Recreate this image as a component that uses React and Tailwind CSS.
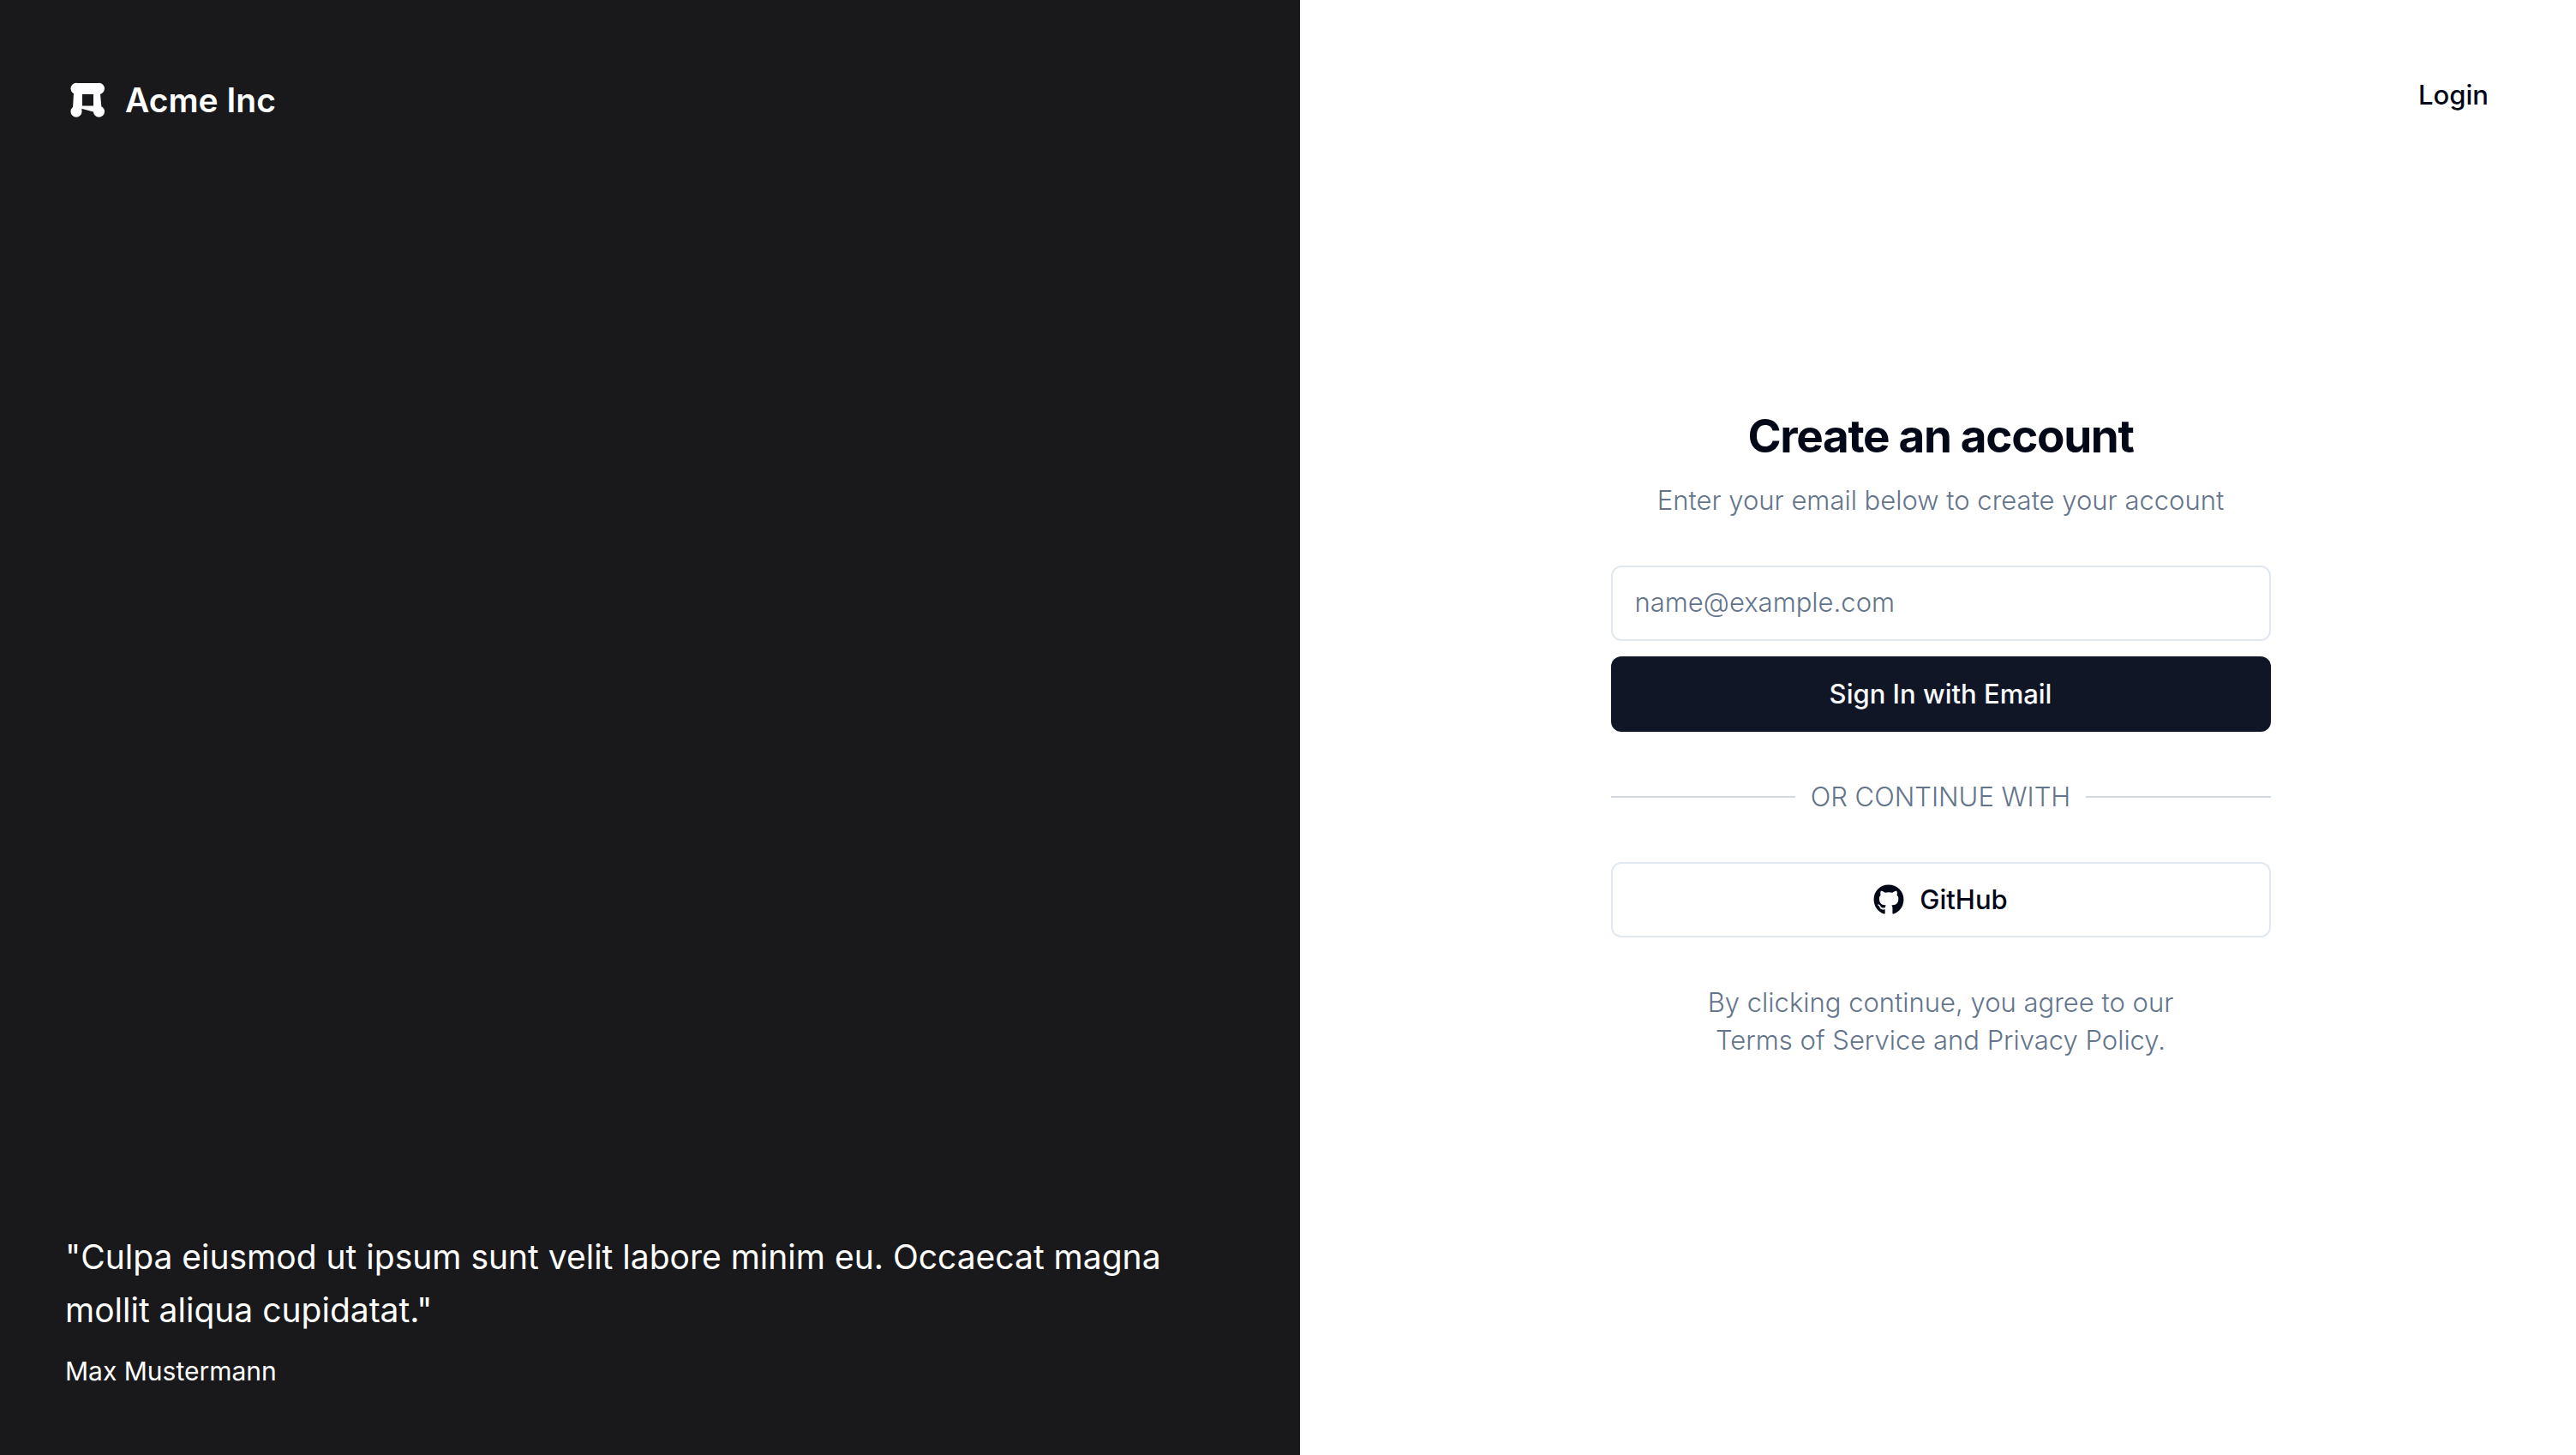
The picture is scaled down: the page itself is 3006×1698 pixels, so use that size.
import { FaGithub } from "react-icons/fa";

function Logo() {
  return (
    <svg viewBox="0 0 54 54" className="size-[54px]" fill="currentColor" aria-hidden="true">
      <circle cx="13" cy="13.300" r="6.500" />
      <circle cx="39.500" cy="13.300" r="6.500" />
      <circle cx="13" cy="40.200" r="6.500" />
      <circle cx="39.500" cy="40.200" r="6.500" />
      <path fillRule="evenodd" d="M13 7H39.500L43 18L41 20L42.500 36L36 43L33 40.500L20 37L13 42L9 36L10 19L9 17ZM20 20V33.500H33V20Z" />
    </svg>
  );
}

export default function App() {
  return (
    <div className="grid min-h-screen grid-cols-[1517fr_1489fr] bg-white font-[Inter,sans-serif] text-[31px] leading-[44px] text-[#020817] antialiased">
      <aside className="flex flex-col justify-between bg-[#19191b] px-[76px] pt-[86px] pb-[76px] text-white">
        <div className="flex items-center gap-4 text-[39px] leading-[62px] font-semibold">
          <Logo />
          Acme Inc
        </div>
        <blockquote className="flex flex-col gap-[18px]">
          <p className="text-[39px] leading-[62px]">
            "Culpa eiusmod ut ipsum sunt velit labore minim eu. Occaecat magna mollit aliqua cupidatat."
          </p>
          <footer className="text-[30px]">Max Mustermann</footer>
        </blockquote>
      </aside>

      <main className="relative flex items-center justify-center pt-3 pl-1.5">
        <a href="#login" className="absolute top-[89px] right-[102px] font-medium">
          Login
        </a>
        <div className="flex w-[770px] flex-col gap-[54px]">
          <header className="flex flex-col gap-[18px] text-center">
            <h1 className="text-[53px] leading-[70px] font-bold tracking-tight">Create an account</h1>
            <p className="font-light text-[#64748b]">Enter your email below to create your account</p>
          </header>
          <form className="flex flex-col gap-[18px]" onSubmit={(e) => e.preventDefault()}>
            <input
              type="email"
              aria-label="Email"
              placeholder="name@example.com"
              className="h-[88px] rounded-xl border-2 border-[#e2e8f0] px-[26px] pb-1 font-light placeholder:text-[#64748b]"
            />
            <button type="submit" className="h-[88px] rounded-xl bg-[#111627] font-medium text-[#f8fafc]">
              Sign In with Email
            </button>
          </form>
          <div className="flex items-center gap-[18px] font-light text-[#64748b] uppercase">
            <span className="h-0.5 flex-1 bg-[#d3d9e2]" />
            Or continue with
            <span className="h-0.5 flex-1 bg-[#d3d9e2]" />
          </div>
          <button
            type="button"
            className="flex h-[88px] items-center justify-center gap-[18px] rounded-xl border-2 border-[#e2e8f0] font-medium"
          >
            <FaGithub className="size-9" aria-hidden="true" />
            GitHub
          </button>
          <p className="px-[70px] text-center font-light text-[#64748b]">
            By clicking continue, you agree to our <a href="#terms">Terms of Service</a> and{" "}
            <a href="#privacy">Privacy Policy</a>.
          </p>
        </div>
      </main>
    </div>
  );
}
